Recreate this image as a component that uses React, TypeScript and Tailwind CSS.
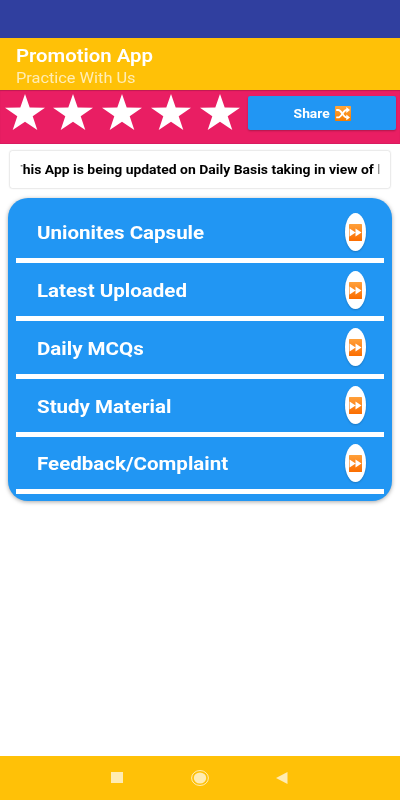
const menuItems = [
  "Unionites Capsule",
  "Latest Uploaded",
  "Daily MCQs",
  "Study Material",
  "Feedback/Complaint",
]

function Star() {
  return (
    <svg viewBox="0 0 40 36" preserveAspectRatio="none" className="h-9 w-10">
      <path
        d="M20 0l4.7 13.5L40 13.7 27.7 22.3 32.3 36 20 27.8 7.7 36l4.6-13.7L0 13.7l15.3-.2z"
        fill="#fff"
      />
    </svg>
  )
}

function ShuffleIcon() {
  return (
    <svg viewBox="0 0 16 15" className="h-[15px] w-4">
      <defs>
        <linearGradient id="shuffle" x1="0" y1="0" x2="0" y2="1">
          <stop offset="0" stopColor="#ffa63a" />
          <stop offset="1" stopColor="#f57c00" />
        </linearGradient>
      </defs>
      <rect width="16" height="15" rx="0.8" fill="url(#shuffle)" />
      <g fill="none" stroke="#fff" strokeWidth="1.8">
        <path d="M1.2 11.4h2c3.4 0 5-7.4 8.3-7.4h.8" />
        <path d="M1.2 4h2c3.4 0 5 7.4 8.3 7.4h.8" />
      </g>
      <path d="M11.3 1.1l3.7 2.9-3.7 2.9zM11.3 8.5l3.7 2.9-3.7 2.9z" fill="#fff" />
    </svg>
  )
}

function ForwardIcon() {
  return (
    <svg viewBox="0 0 13 17" className="h-[17px] w-[13px]">
      <defs>
        <linearGradient id="forward" x1="0" y1="0" x2="0" y2="1">
          <stop offset="0" stopColor="#ffa03a" />
          <stop offset="1" stopColor="#fb6d00" />
        </linearGradient>
      </defs>
      <rect width="13" height="17" rx="0.6" fill="url(#forward)" />
      <path d="M.6 4.6l6 3.9-6 3.9zM6.5 4.6l6 3.9-6 3.9z" fill="#fff" />
    </svg>
  )
}

function MenuRow({ label }: { label: string }) {
  return (
    <div className="flex h-[57.8px] flex-col">
      <div className="flex flex-1 items-center justify-between pr-[18px] pl-[21px]">
        <span className="mt-[3px] origin-left scale-x-[1.08] text-[19px] font-bold whitespace-nowrap text-white">
          {label}
        </span>
        <div className="flex h-[38px] w-[21px] items-center justify-center rounded-[50%] bg-white pt-px shadow-[0_1px_2px_rgba(0,0,0,0.2)]">
          <ForwardIcon />
        </div>
      </div>
      <div className="h-[5px] bg-white" />
    </div>
  )
}

export default function App() {
  return (
    <div className="flex h-[800px] w-[400px] flex-col overflow-hidden bg-white font-[Roboto,sans-serif]">
      <div className="h-[37.5px] bg-[#303f9f]" />

      <header className="h-[52.5px] bg-[#ffc107] pt-[6.5px] pl-4">
        <h1 className="w-fit origin-left scale-x-[1.07] text-[19px] leading-6 font-semibold text-white">
          Promotion App
        </h1>
        <p className="w-fit origin-left scale-x-[1.09] text-[15px] leading-5 text-white/70">
          Practice With Us
        </p>
      </header>

      <div className="flex h-[54px] items-start border-b border-[#d81b60] bg-[#e91e63] pt-1 pr-1 pl-[4.5px] shadow-[inset_0_1px_1px_rgba(0,0,0,0.18)]">
        <div className="flex gap-[8.8px]">
          {[1, 2, 3, 4, 5].map((n) => (
            <Star key={n} />
          ))}
        </div>
        <button className="mt-[1.5px] ml-auto flex h-[34.5px] w-[148px] items-center justify-center gap-[5px] rounded-[2px] bg-[#2196f3] pt-px pl-0.5 text-white shadow-[0_1px_2px_rgba(0,0,0,0.25)]">
          <span className="mt-px origin-right scale-x-[1.04] text-[13.3px] font-bold">Share</span>
          <ShuffleIcon />
        </button>
      </div>

      <div className="mx-2.5 mt-[6.5px] flex h-[37px] items-center rounded-[2px] bg-white px-2.5 pt-px shadow-[0_0_2px_rgba(0,0,0,0.3)]">
        <div className="w-full overflow-hidden [mask-image:linear-gradient(to_right,transparent,#000_3px,#000_calc(100%-3px),transparent)]">
          <p className="-ml-[6px] w-fit origin-left scale-x-[1.048] text-[13.3px] leading-[21px] font-bold whitespace-nowrap text-black">
            This App is being updated on Daily Basis taking in view of l
          </p>
        </div>
      </div>

      <main className="mx-2 mt-[10.5px] h-[303px] rounded-[20px] bg-[#2196f3] px-2 pt-[7.5px] shadow-[0_1px_4px_rgba(0,0,0,0.35)]">
        {menuItems.map((label) => (
          <MenuRow key={label} label={label} />
        ))}
      </main>

      <nav className="mt-auto flex h-[44.5px] items-center bg-[#ffc107] pl-[111px]">
        <div className="h-[11px] w-3 bg-[#ffecb3]" />
        <svg viewBox="0 0 18 16" className="ml-[68px] h-4 w-[18px]">
          <ellipse cx="9" cy="8" rx="8.4" ry="7.5" fill="none" stroke="#ffecb3" strokeWidth="1" />
          <ellipse cx="9" cy="8" rx="6.2" ry="5.6" fill="#ffecb3" />
        </svg>
        <svg viewBox="0 0 12 12" className="ml-[67px] h-3 w-3">
          <path d="M11.5 0v12L0 6z" fill="#ffecb3" />
        </svg>
      </nav>
    </div>
  )
}
